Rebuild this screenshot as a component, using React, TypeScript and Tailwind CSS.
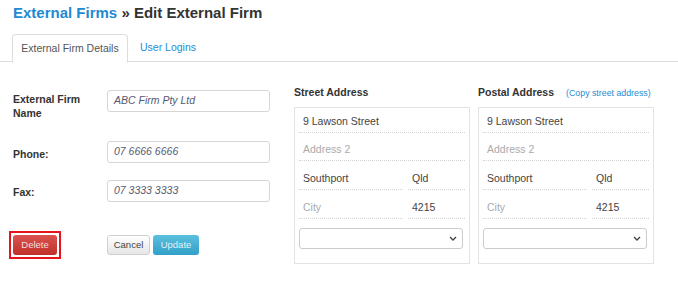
import React from "react";

const font = { fontFamily: '"Liberation Sans", Arial, sans-serif' };

function AddrField({ value, placeholder, className = "", h = "h-[29px]" }: { value?: string; placeholder?: string; className?: string; h?: string }) {
  return (
    <div className={`${h} border-b border-dotted border-[#d4d4d4] flex items-end pb-[5px] pl-[4px] text-[10.5px] leading-[12px] ${value ? "text-[#444]" : "text-[#aaa]"} ${className}`}>
      {value ?? placeholder}
    </div>
  );
}

function AddressBox() {
  return (
    <div className="w-[176px] h-[157px] border border-[#e3e3e3] px-[4px]">
      <AddrField value="9 Lawson Street" h="h-[25px]" />
      <AddrField placeholder="Address 2" h="h-[28px]" />
      <div className="flex gap-[5px]">
        <AddrField value="Southport" className="w-[104px]" />
        <AddrField value="Qld" className="flex-1" />
      </div>
      <div className="flex gap-[5px]">
        <AddrField placeholder="City" className="w-[104px]" />
        <AddrField value="4215" className="flex-1" />
      </div>
      <div className="mt-[9px] mr-[2px] h-[21px] border border-[#ccc] rounded-[3px] flex items-center justify-end pr-[5px]">
        <svg width="8" height="5" viewBox="0 0 8 5"><path d="M1 1l3 3 3-3" fill="none" stroke="#444" strokeWidth="1.4" /></svg>
      </div>
    </div>
  );
}

function Input({ value }: { value: string }) {
  return (
    <div className="w-[163px] h-[22px] border border-[#d6d6d6] rounded-[3px] flex items-center pl-[6px] text-[10.5px] italic text-[#555a70]">
      {value}
    </div>
  );
}

export default function App() {
  return (
    <div className="w-[678px] h-[281px] bg-white relative overflow-hidden" style={font}>
      <div className="pt-[4px] pl-[13px] text-[15px] font-bold leading-[18px]">
        <span className="text-[#1f8ad2]">External Firms</span>
        <span className="text-[#333]"> » Edit External Firm</span>
      </div>
      <div className="mt-[12px] flex border-b border-[#ddd] h-[28px] pl-[12px]">
        <div className="w-[116px] justify-center h-[29px] border border-[#ddd] border-b-white rounded-t-[4px] bg-white text-[10.5px] text-[#555] flex items-center">
          External Firm Details
        </div>
        <div className="pl-[12px] h-[28px] text-[10.5px] text-[#1f8ad2] flex items-center">User Logins</div>
      </div>
      <div className="flex">
        <div className="w-[294px] pl-[13px]">
          <div className="mt-[28px] flex">
            <div className="w-[94px] text-[10.5px] font-bold text-[#333] leading-[14px] pt-[2px]">External Firm<br />Name</div>
            <Input value="ABC Firm Pty Ltd" />
          </div>
          <div className="mt-[21px] flex items-center">
            <div className="w-[94px] text-[10.5px] font-bold text-[#333] pt-[5px]">Phone:</div>
            <Input value="07 6666 6666" />
          </div>
          <div className="mt-[17px] flex items-center">
            <div className="w-[94px] text-[10.5px] font-bold text-[#333] pt-[4px]">Fax:</div>
            <Input value="07 3333 3333" />
          </div>
          <div className="mt-[29px] flex items-center">
            <div className="w-[94px]">
              <div className="inline-block border-2 border-[#e8141c] p-[2px] -ml-[4px]">
                <div className="h-[20px] w-[44px] justify-center rounded-[3px] bg-gradient-to-b from-[#d9534f] to-[#c12e2a] text-[#f6dede] text-[9.5px] flex items-center">Delete</div>
              </div>
            </div>
            <div className="h-[20px] w-[43px] justify-center rounded-[3px] bg-gradient-to-b from-[#ffffff] to-[#e6e6e6] border border-[#d0d0d0] text-[#444] text-[9.5px] flex items-center">Cancel</div>
            <div className="ml-[3px] h-[20px] w-[46px] justify-center rounded-[3px] bg-gradient-to-b from-[#5bc0de] to-[#31a0c8] text-[#dff3fa] text-[9.5px] flex items-center">Update</div>
          </div>
        </div>
        <div className="w-[184px]">
          <div className="mt-[23px] h-[14px] text-[10.5px] font-bold text-[#333] leading-[14px]">Street Address</div>
          <div className="mt-[8px]"><AddressBox /></div>
        </div>
        <div>
          <div className="mt-[23px] h-[14px] flex items-baseline leading-[14px]">
            <span className="text-[10.5px] font-bold text-[#333]">Postal Address</span>
            <span className="ml-[12px] text-[8.8px] text-[#1f8ad2]">(Copy street address)</span>
          </div>
          <div className="mt-[8px]"><AddressBox /></div>
        </div>
      </div>
    </div>
  );
}
